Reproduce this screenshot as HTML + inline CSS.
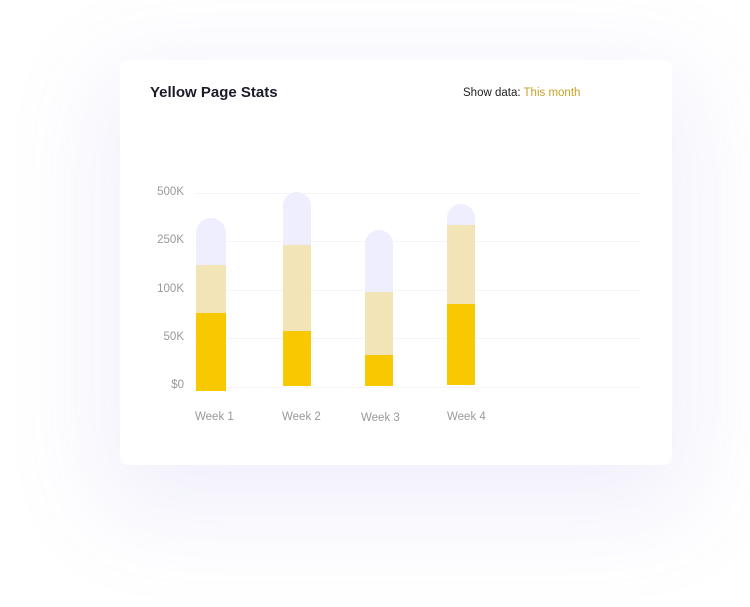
<!DOCTYPE html>
<html><head><meta charset="utf-8"><style>
html,body{margin:0;padding:0;width:750px;height:607px;background:#fff;overflow:hidden;font-family:"Liberation Sans",sans-serif}
.card{position:absolute;left:120px;top:60px;width:552px;height:405px;background:#fff;border-radius:8px;box-shadow:0 30px 100px 20px rgba(120,110,230,0.10)}
.t{position:absolute;left:150px;top:84px;font-size:15px;font-weight:bold;color:#1a1a2a}
.sd{position:absolute;left:463px;top:87px;font-size:11.5px;color:#222}
.sd span{color:#c9a227}
.g{position:absolute;left:195px;width:445px;height:1px;background:#f5f5f8}
.yl{position:absolute;left:150px;font-size:11.5px;color:#999;width:34px;text-align:right}
.b{position:absolute}
.xl{position:absolute;top:411px;font-size:11.5px;color:#999}
</style></head><body>
<div class="card"></div>
<div class="t">Yellow Page Stats</div>
<div class="sd">Show data: <span>This month</span></div>
<div class="g" style="top:193px"></div><div class="g" style="top:241px"></div><div class="g" style="top:290px"></div><div class="g" style="top:338px"></div><div class="g" style="top:387px"></div>
<div class="yl" style="top:186px">500K</div>
<div class="yl" style="top:234px">250K</div>
<div class="yl" style="top:283px">100K</div>
<div class="yl" style="top:331px">50K</div>
<div class="yl" style="top:379px">$0</div>

<div class="b" style="left:196px;top:218px;width:30px;height:47px;background:#efeefe;border-radius:15px 15px 0 0"></div>
<div class="b" style="left:196px;top:265px;width:30px;height:48px;background:#f2e4b6"></div>
<div class="b" style="left:196px;top:313px;width:30px;height:78px;background:#f8c800"></div>

<div class="b" style="left:283px;top:192px;width:28px;height:53px;background:#efeefe;border-radius:14px 14px 0 0"></div>
<div class="b" style="left:283px;top:245px;width:28px;height:86px;background:#f2e4b6"></div>
<div class="b" style="left:283px;top:331px;width:28px;height:55px;background:#f8c800"></div>

<div class="b" style="left:365px;top:230px;width:28px;height:62px;background:#efeefe;border-radius:14px 14px 0 0"></div>
<div class="b" style="left:365px;top:292px;width:28px;height:63px;background:#f2e4b6"></div>
<div class="b" style="left:365px;top:355px;width:28px;height:31px;background:#f8c800"></div>

<div class="b" style="left:447px;top:204px;width:28px;height:21px;background:#efeefe;border-radius:14px 14px 0 0"></div>
<div class="b" style="left:447px;top:225px;width:28px;height:79px;background:#f2e4b6"></div>
<div class="b" style="left:447px;top:304px;width:28px;height:81px;background:#f8c800"></div>

<div class="xl" style="left:195px">Week 1</div>
<div class="xl" style="left:282px">Week 2</div>
<div class="xl" style="left:361px;top:412px">Week 3</div>
<div class="xl" style="left:447px">Week 4</div>
</body></html>
